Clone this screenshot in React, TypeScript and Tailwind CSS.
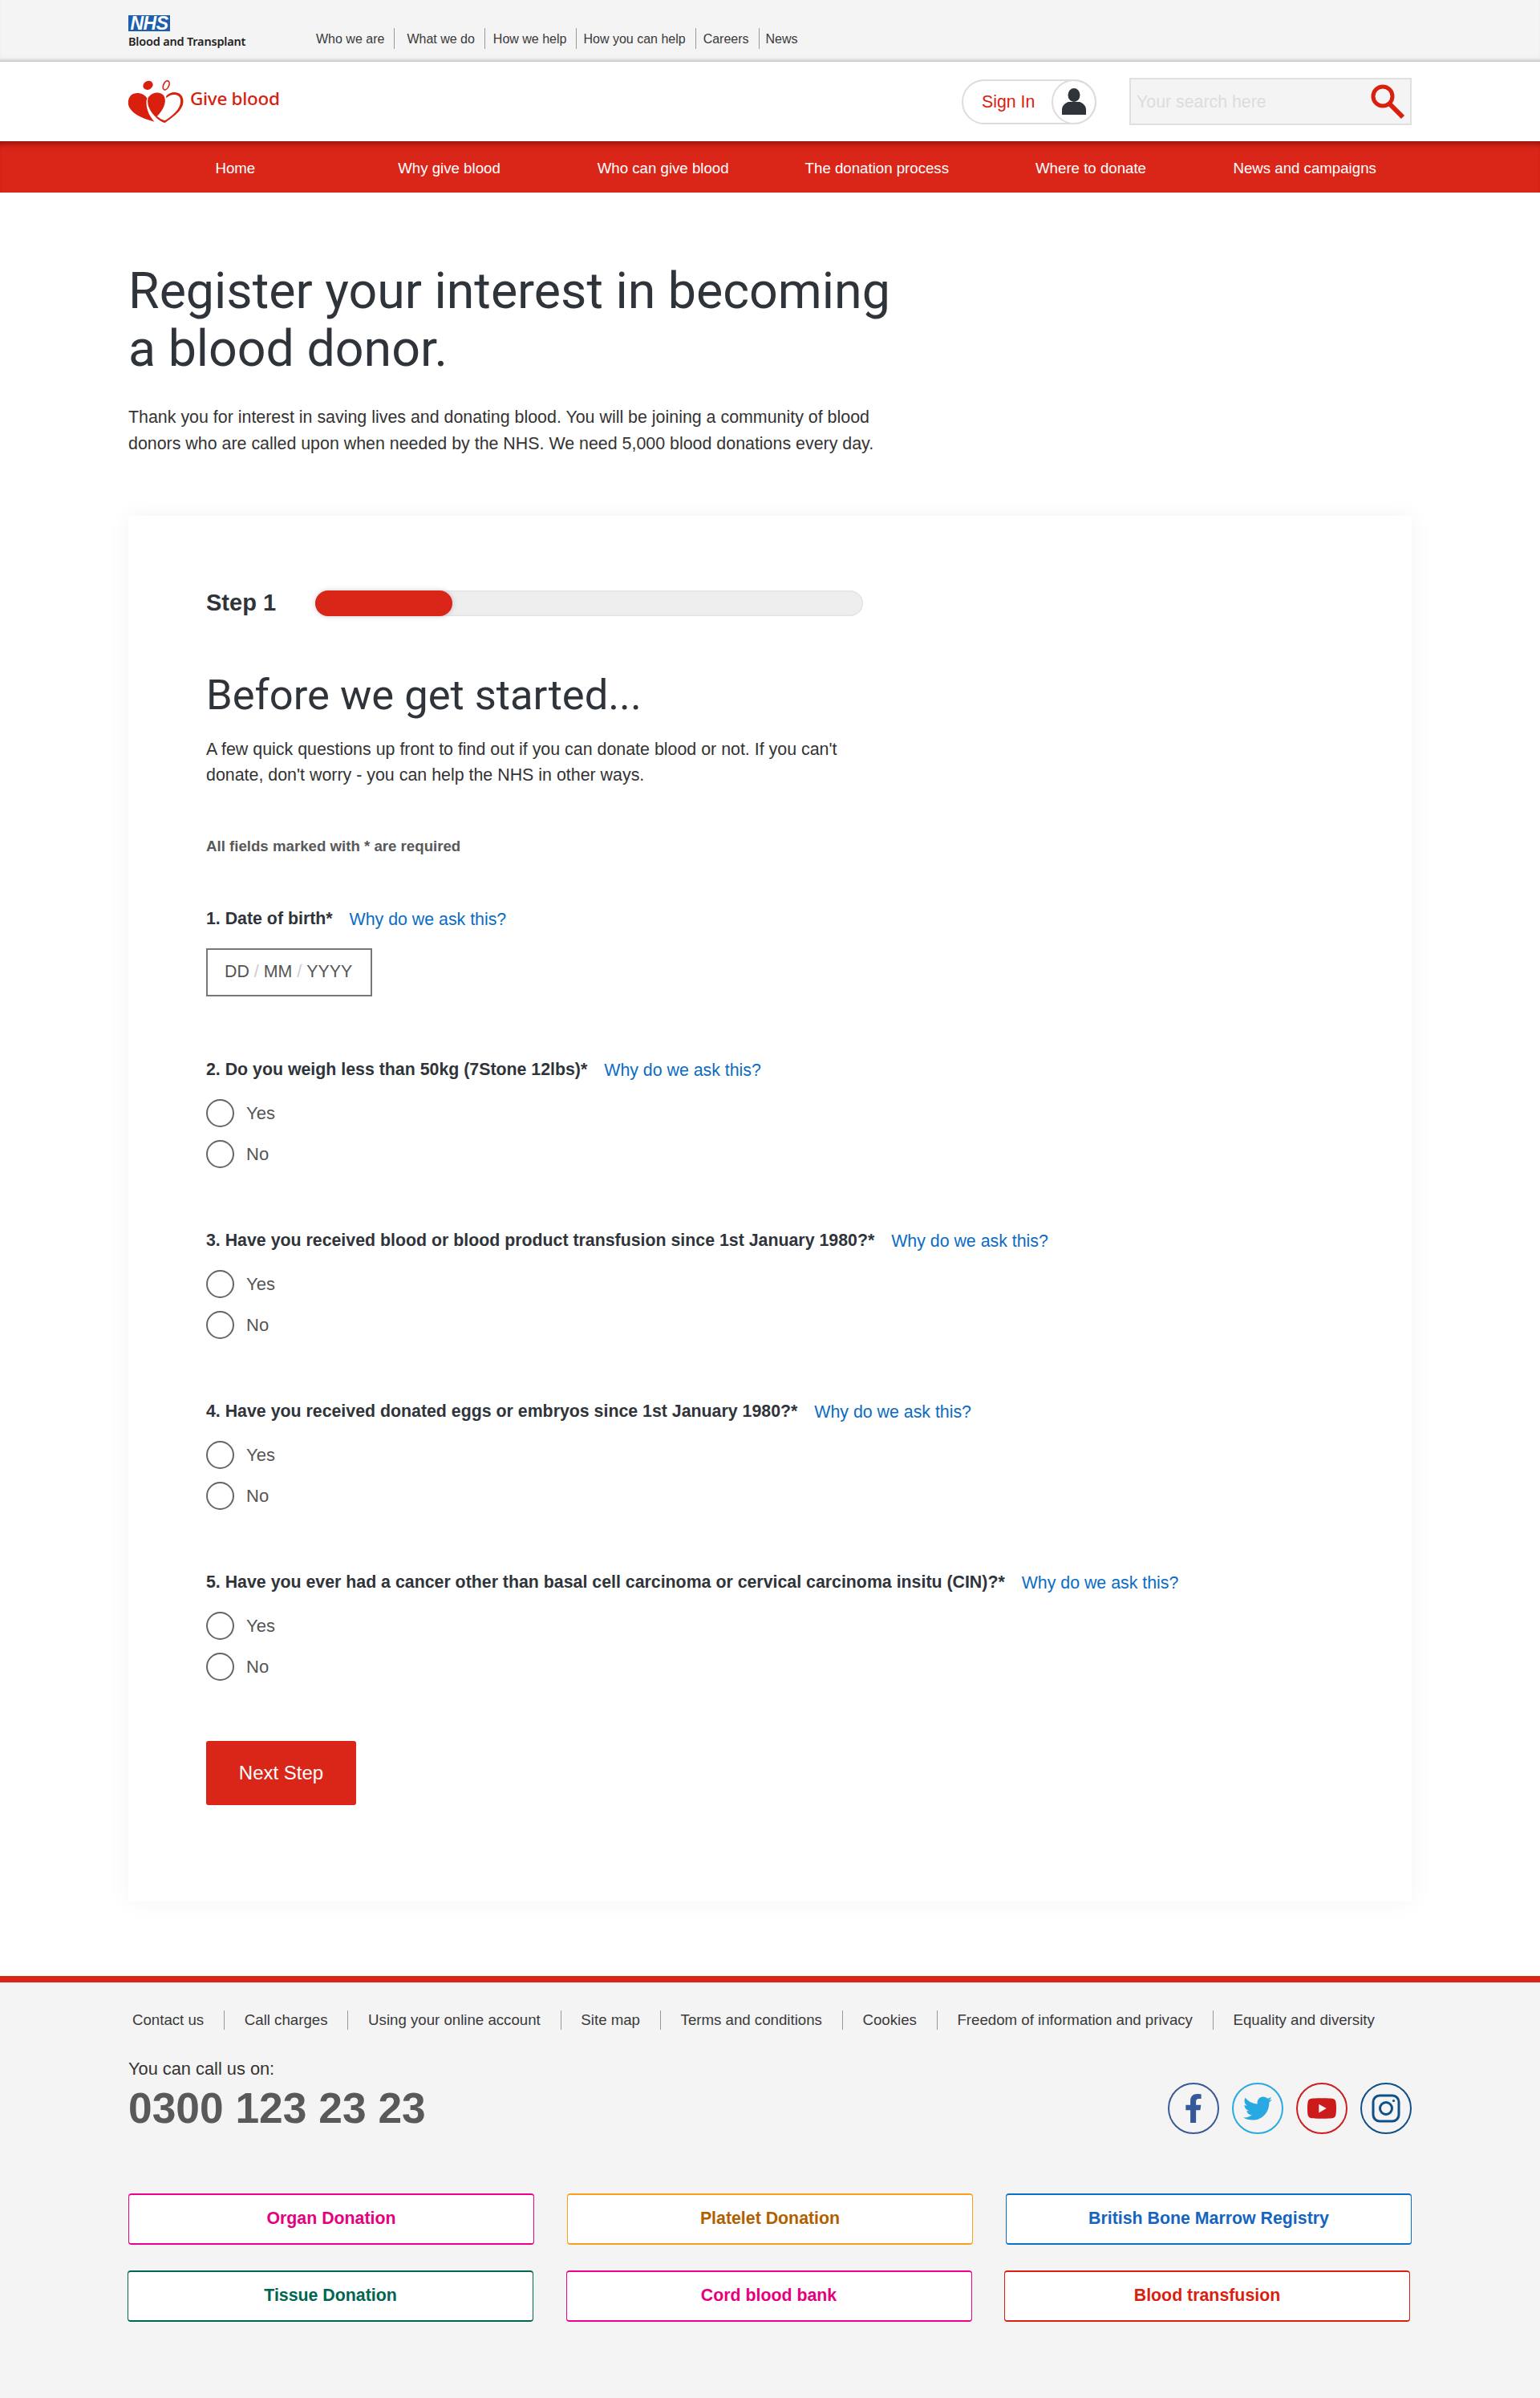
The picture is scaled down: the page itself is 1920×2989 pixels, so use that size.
import { FaFacebookF, FaTwitter, FaYoutube } from 'react-icons/fa';

const sans = "font-['Liberation_Sans',Arial,sans-serif]";

const topLinks = [
  { label: 'Who we are', cls: 'pr-3' },
  { label: 'What we do', cls: 'pl-[15px] pr-3 border-l border-[#999]' },
  { label: 'How we help', cls: 'pl-[10px] pr-3 border-l border-[#999]' },
  { label: 'How you can help', cls: 'pl-[8px] pr-3 border-l border-[#999]' },
  { label: 'Careers', cls: 'pl-[9px] pr-[12px] border-l border-[#999]' },
  { label: 'News', cls: 'pl-[8px] border-l border-[#999]' },
];

const navLinks = ['Home', 'Why give blood', 'Who can give blood', 'The donation process', 'Where to donate', 'News and campaigns'];

const footerLinks = ['Contact us', 'Call charges', 'Using your online account', 'Site map', 'Terms and conditions', 'Cookies', 'Freedom of information and privacy', 'Equality and diversity'];

const radioQuestions = [
  '2. Do you weigh less than 50kg (7Stone 12lbs)*',
  '3. Have you received blood or blood product transfusion since 1st January 1980?*',
  '4. Have you received donated eggs or embryos since 1st January 1980?*',
  '5. Have you ever had a cancer other than basal cell carcinoma or cervical carcinoma insitu (CIN)?*',
];

function GiveBloodMark() {
  return (
    <svg width="72" height="55" viewBox="25 30 215 165" fill="#d9200f" className="-ml-[2px]">
      {/* left solid heart */}
      <path d="M100 100 C88 76 30 68 30 118 C30 150 76 176 128 188 C110 170 92 135 100 100 Z" />
      {/* middle solid heart */}
      <path d="M104 100 C118 72 170 70 168 112 C166 136 150 156 134 172 C116 154 98 130 104 100 Z" />
      {/* outline heart */}
      <path d="M172 92 C190 70 236 72 236 112 C236 146 196 172 168 192 C156 190 142 180 132 170 L138 168 C148 176 158 182 168 184 C194 166 226 142 226 110 C226 82 192 80 172 100 Z" />
      {/* heads */}
      <ellipse cx="104" cy="52" rx="19" ry="16" transform="rotate(-30 104 52)" />
      <ellipse cx="172" cy="52" rx="10" ry="18" transform="rotate(25 172 52)" fill="none" stroke="#d9200f" strokeWidth="5" />
    </svg>
  );
}

function WhyLink() {
  return <a className="text-[21.33px] leading-[28px] text-[#0a6cc4] ml-[21px]">Why do we ask this?</a>;
}

function Radio({ label }: { label: string }) {
  return (
    <label className="flex items-center h-[34px]">
      <span className="w-[35px] h-[35px] rounded-full border-2 border-[#666] bg-white shrink-0" />
      <span className="ml-[15px] text-[22px] text-[#555]">{label}</span>
    </label>
  );
}

export default function App() {
  return (
    <div className={`${sans} bg-white text-[#2f343a] min-h-[2989px]`}>
      {/* top bar */}
      <div className="h-[77px] bg-[#f4f4f4] shadow-[inset_0_-5px_4px_-3px_rgba(0,0,0,0.22)]">
        <div className="w-[1600px] mx-auto h-full flex">
          <div className="w-[234px] pt-[19px]">
            <div className="w-[52px] h-[20px] bg-[#1d5fae] flex items-center justify-center text-white font-bold italic text-[23px] tracking-[-0.5px]">NHS</div>
            <div className="font-['Noto_Sans',sans-serif] font-semibold text-[14.5px] leading-[20px] mt-[2px] text-[#222] tracking-[-0.2px]">Blood and Transplant</div>
          </div>
          <div className="flex items-start pt-[35px]">
            {topLinks.map((l) => (
              <a key={l.label} className={`h-[26px] pt-[2px] flex items-center text-[16px] text-[#3a3a3a] ${l.cls}`}>{l.label}</a>
            ))}
          </div>
        </div>
      </div>

      {/* logo row */}
      <div className="h-[99px] bg-white">
        <div className="w-[1600px] mx-auto h-full flex items-center justify-between">
          <div className="flex items-center gap-[7px] -mt-[1px]">
            <GiveBloodMark />
            <span className="font-['Noto_Sans',sans-serif] font-medium text-[22.5px] text-[#d9200f] tracking-[-0.3px] -mt-[6px]">Give blood</span>
          </div>
          <div className="flex items-center gap-[41px]">
            <div className="w-[168px] h-[56px] rounded-full border-2 border-[#ddd] flex items-center justify-between pl-[23px] relative">
              <span className="text-[21.33px] text-[#d9200f] pt-[2px]">Sign In</span>
              <span className="absolute -right-[2px] -top-[2px] w-[56px] h-[56px] rounded-full border-2 border-[#ddd] flex items-center justify-center">
                <svg width="32" height="34" viewBox="0 0 32 34" fill="#2f343a">
                  <ellipse cx="16" cy="8.5" rx="7.5" ry="8.5" />
                  <path d="M9 17 L23 17 C28 19 31 22 31 27 L31 33 L1 33 L1 27 C1 22 4 19 9 17 Z" />
                </svg>
              </span>
            </div>
            <div className="w-[352px] h-[59px] bg-[#f4f4f4] border-2 border-[#e0e0e0] flex items-center justify-between pl-[7px] pr-[5px]">
              <span className="text-[21.33px] text-[#dcdcdc] pt-[2px]">Your search here</span>
              <svg width="44" height="44" viewBox="0 0 44 44" fill="none" stroke="#d9200f">
                <circle cx="15" cy="15" r="12" strokeWidth="5" />
                <path d="M23 24 L40 41" strokeWidth="6" />
              </svg>
            </div>
          </div>
        </div>
      </div>

      {/* main nav */}
      <div className="h-[64px] bg-[#da2619] shadow-[inset_0_8px_6px_-4px_rgba(100,10,0,0.55)]">
        <div className="w-[1600px] mx-auto h-full grid grid-cols-6">
          {navLinks.map((n) => (
            <a key={n} className="flex items-center justify-center pt-[3px] text-[18.67px] text-white">{n}</a>
          ))}
        </div>
      </div>

      <main className="w-[1600px] mx-auto pt-[87px]">
        <h1 className="font-['Roboto',sans-serif] text-[62.7px] leading-[72px] font-normal text-[#2f343a] w-[960px]">Register your interest in becoming a blood donor.</h1>
        <p className="mt-[33px] text-[21.4px] leading-[32.5px] text-[#333] w-[960px]">Thank you for interest in saving lives and donating blood. You will be joining a community of blood donors who are called upon when needed by the NHS. We need 5,000 blood donations every day.</p>

        <section className="mt-[74px] rounded-[4px] bg-white shadow-[0_0_30px_rgba(0,0,0,0.05)] pl-[97px] pt-[93px] pb-[120px]">
          <div className="flex items-center h-[32px]">
            <span className="w-[136px] text-[29px] font-bold text-[#2f343a]">Step 1</span>
            <div className="w-[683px] h-[32px] rounded-full bg-[#eeeeee] shadow-[inset_0_0_3px_rgba(0,0,0,0.12)]">
              <div className="w-[171px] h-full rounded-full bg-[#da2619] shadow-[0_0_6px_rgba(0,0,0,0.2)]" />
            </div>
          </div>

          <h2 className="mt-[66px] font-['Roboto',sans-serif] text-[52.5px] leading-[64px] font-normal text-[#2f343a]">Before we get started...</h2>
          <p className="mt-[20px] text-[21.4px] leading-[32px] text-[#333] w-[860px]">A few quick questions up front to find out if you can donate blood or not. If you can't donate, don't worry - you can help the NHS in other ways.</p>

          <p className="mt-[59px] text-[18.67px] leading-[28px] font-bold text-[#58595b]">All fields marked with * are required</p>

          <div className="mt-[63px] flex h-[28px] items-center">
            <span className="text-[21.33px] font-bold">1. Date of birth*</span>
            <WhyLink />
          </div>
          <div className="mt-[22px] w-[207px] h-[60px] border-2 border-[#777] flex items-center pl-[21px] text-[21.33px] text-[#555]">
            DD <span className="text-[#ccc] mx-[6px]">/</span> MM <span className="text-[#ccc] mx-[6px]">/</span> YYYY
          </div>

          {radioQuestions.map((q) => (
            <div key={q} className="mt-[78px]">
              <div className="flex h-[28px] items-center">
                <span className="text-[21.33px] font-bold">{q}</span>
                <WhyLink />
              </div>
              <div className="mt-[22px] flex flex-col gap-[17px]">
                <Radio label="Yes" />
                <Radio label="No" />
              </div>
            </div>
          ))}

          <button className="mt-[76px] w-[187px] h-[80px] rounded-[3px] bg-[#da2619] text-white text-[24px]">Next Step</button>
        </section>
      </main>

      <footer className="mt-[93px] bg-[#f4f4f4] border-t-[8px] border-[#da2619] h-[526px]">
        <div className="w-[1600px] mx-auto">
          <div className="pt-[35px] flex">
            {footerLinks.map((f, i) => (
              <a key={f} className={i === 0 ? 'h-[24px] flex items-center text-[18.67px] text-[#3a3a3a] pl-[5px] pr-[25px]' : 'h-[24px] flex items-center text-[18.67px] text-[#3a3a3a] pl-[24.6px] pr-[25px] border-l border-[#999]'}>{f}</a>
            ))}
          </div>
          <div className="mt-[37px] flex justify-between items-start">
            <div>
              <p className="text-[21.8px] leading-[24px] text-[#333]">You can call us on:</p>
              <p className="text-[53.33px] leading-[60px] font-bold text-[#58595b] mt-[7px]">0300 123 23 23</p>
            </div>
            <div className="flex gap-[16px] mt-[29px]">
              <span className="w-[64px] h-[64px] rounded-full border-2 border-[#3b5998] flex items-center justify-center text-[#35589a]"><FaFacebookF size={36} /></span>
              <span className="w-[64px] h-[64px] rounded-full border-2 border-[#29a9e1] flex items-center justify-center text-[#29a9e1]"><FaTwitter size={36} /></span>
              <span className="w-[64px] h-[64px] rounded-full border-2 border-[#cc1f1f] flex items-center justify-center text-[#cc1b1b]"><FaYoutube size={38} /></span>
              <span className="w-[64px] h-[64px] rounded-full border-2 border-[#0f5087] flex items-center justify-center">
                <svg width="36" height="36" viewBox="0 0 36 36" fill="none" stroke="#0f5087" strokeWidth="3">
                  <rect x="2" y="2" width="32" height="32" rx="8" />
                  <circle cx="18" cy="18" r="7.5" />
                  <circle cx="27.5" cy="8.5" r="1.6" fill="#0f5087" stroke="none" />
                </svg>
              </span>
            </div>
          </div>

          <div className="mt-[74px] flex justify-between">
            <a className="w-[506px] h-[64px] rounded-[4px] bg-white border-x border-y-2 border-[#ec008c] flex items-center justify-center text-[21.33px] font-bold text-[#e6007e]">Organ Donation</a>
            <a className="w-[506px] h-[64px] rounded-[4px] bg-white border-x border-y-2 border-[#f9a01b] flex items-center justify-center text-[21.33px] font-bold text-[#b15f00]">Platelet Donation</a>
            <a className="w-[506px] h-[64px] rounded-[4px] bg-white border-x border-y-2 border-[#0b70c8] flex items-center justify-center text-[21.33px] font-bold text-[#1565c0]">British Bone Marrow Registry</a>
          </div>
          <div className="mt-[32px] -ml-px pr-[2px] flex justify-between">
            <a className="w-[506px] h-[64px] rounded-[4px] bg-white border-x border-y-2 border-[#00664f] flex items-center justify-center text-[21.33px] font-bold text-[#00664f]">Tissue Donation</a>
            <a className="w-[506px] h-[64px] rounded-[4px] bg-white border-x border-y-2 border-[#ec008c] flex items-center justify-center text-[21.33px] font-bold text-[#e6007e]">Cord blood bank</a>
            <a className="w-[506px] h-[64px] rounded-[4px] bg-white border-x border-y-2 border-[#da1f10] flex items-center justify-center text-[21.33px] font-bold text-[#da1f10]">Blood transfusion</a>
          </div>
        </div>
      </footer>
    </div>
  );
}
